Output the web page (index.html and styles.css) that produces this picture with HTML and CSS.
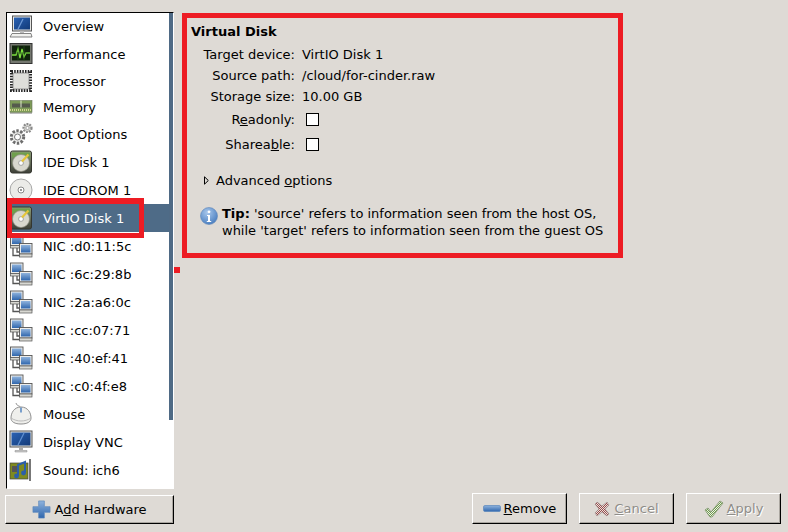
FILE: index.html
```html
<!DOCTYPE html>
<html lang="en">
<head>
<meta charset="utf-8">
<title>Virtual Disk</title>
<link rel="stylesheet" href="styles.css">
</head>
<body>
<svg class="defs" width="0" height="0" aria-hidden="true">
  <defs>
    <linearGradient id="blue" x1="0" y1="0" x2="0" y2="1"><stop offset="0" stop-color="#8fb3dd"/><stop offset="1" stop-color="#2f66ad"/></linearGradient>
    <linearGradient id="screen" x1="0" y1="0" x2="1" y2="1"><stop offset="0" stop-color="#2a62b4"/><stop offset="1" stop-color="#123a78"/></linearGradient>
    <linearGradient id="steel" x1="0" y1="0" x2="0" y2="1"><stop offset="0" stop-color="#8fa07a"/><stop offset="1" stop-color="#3d3f38"/></linearGradient>
    <radialGradient id="info" cx="0.4" cy="0.3" r="0.8"><stop offset="0" stop-color="#a9c8ec"/><stop offset="1" stop-color="#3f76bb"/></radialGradient>
    <pattern id="stipple-red" width="2" height="2" patternUnits="userSpaceOnUse"><rect width="2" height="2" fill="#e8e2de"/><rect width="1" height="1" fill="#9a4a4a"/><rect x="1" y="1" width="1" height="1" fill="#9a4a4a"/></pattern>
    <pattern id="stipple-green" width="2" height="2" patternUnits="userSpaceOnUse"><rect width="2" height="2" fill="#eef2e6"/><rect width="1" height="1" fill="#6f9a4f"/><rect x="1" y="1" width="1" height="1" fill="#6f9a4f"/></pattern>
    <symbol id="disk" viewBox="0 0 24 24">
      <rect x="1.500" y="1" width="21" height="22" rx="2" fill="url(#steel)" stroke="#34362f"/>
      <path d="M3 2.500h18v5H3z" fill="#6f9f4c"/>
      <circle cx="12" cy="13" r="8.500" fill="#d8d7ce" stroke="#8b8b80" stroke-width=".7"/>
      <circle cx="12" cy="13" r="2.400" fill="#fff" stroke="#888" stroke-width=".7"/>
      <path d="M13 11.500 19.500 4.500" stroke="#e6c53a" stroke-width="2.200"/>
    </symbol>
    <symbol id="nic" viewBox="0 0 24 24">
      <path d="M4 14v7.500h7M8 14v4h3" fill="none" stroke="#555" stroke-width="1.300"/>
      <rect x="1.500" y="1" width="12.500" height="10.500" fill="#ececea" stroke="#555" stroke-width=".9"/>
      <rect x="3" y="2.500" width="9.500" height="7.500" fill="url(#blue)"/>
      <rect x="1.500" y="11.500" width="12.500" height="2.500" fill="#d8d8d2" stroke="#555" stroke-width=".7"/>
      <rect x="10.500" y="9.500" width="12.500" height="10.500" fill="#ececea" stroke="#555" stroke-width=".9"/>
      <rect x="12" y="11" width="9.500" height="7.500" fill="url(#blue)"/>
      <rect x="10.500" y="20" width="12.500" height="3" fill="#d8d8d2" stroke="#555" stroke-width=".7"/>
    </symbol>
    <symbol id="gear" viewBox="0 0 24 24">
      <circle cx="8.500" cy="15" r="6.200" fill="#ececea" stroke="#6d6d6d" stroke-width="3" stroke-dasharray="2.400 1.500"/>
      <circle cx="8.500" cy="15" r="3" fill="#fff" stroke="#777"/>
      <circle cx="18.500" cy="6" r="4" fill="#d8d8d4" stroke="#8a8a8a" stroke-width="2.200" stroke-dasharray="1.800 1.100"/>
      <circle cx="18.500" cy="6" r="1.600" fill="#fff" stroke="#888" stroke-width=".7"/>
    </symbol>
  </defs>
</svg>

<div class="top">
  <nav class="sidebar">
    <div class="scrollbar"></div>
    <ul class="list">
      <li class="row h27"><svg class="icon" viewBox="0 0 24 24"><rect x="3.500" y="1" width="19" height="15" fill="#e6e6e3" stroke="#555"/><rect x="5" y="2.500" width="16" height="12" fill="url(#screen)"/><path d="M9 14l5-10" stroke="#6f9ad6" stroke-width="1.200"/><path d="M11 16h4v2h-4z" fill="#bbb"/><path d="M3 18.500h19l1 3.500H1z" fill="#f1f1ee" stroke="#666" stroke-width=".8"/></svg><span>Overview</span></li>
      <li class="row h28"><svg class="icon" viewBox="0 0 24 24"><rect x="1" y="1.500" width="22" height="20" fill="#74776f" stroke="#333"/><rect x="3" y="3.500" width="18" height="15" fill="#10240c"/><path d="M3 13h4l2-6 2 9 2-9 2 8 2-4h4" fill="none" stroke="#7de03f" stroke-width="1.300"/><path d="M3 11h18M9 3.500v15M15 3.500v15" stroke="#2d5a22" stroke-width=".6"/></svg><span>Performance</span></li>
      <li class="row h26"><svg class="icon" viewBox="0 0 24 24"><rect x="2.500" y="2.500" width="19" height="19" fill="none" stroke="#222" stroke-width="3" stroke-dasharray="1.500 1.200"/><rect x="4" y="4" width="16" height="16" rx="1" fill="#dededa" stroke="#777" stroke-width=".7"/></svg><span>Processor</span></li>
      <li class="row h26"><svg class="icon" viewBox="0 0 24 24"><rect x="1" y="5.500" width="22" height="12" fill="#7d9a58" stroke="#69735a" stroke-width=".6"/><path d="M3 8.500h18v4H3z" fill="#555a4d"/><path d="M12 5.500v7" stroke="#e2ead0"/><path d="M1 15h22" stroke="#d0d690" stroke-width="2" stroke-dasharray="1 1"/><path d="M1 18.500h22" stroke="#bbb"/></svg><span>Memory</span></li>
      <li class="row h28"><svg class="icon" viewBox="0 0 24 24"><use href="#gear"/></svg><span>Boot Options</span></li>
      <li class="row h28"><svg class="icon" viewBox="0 0 24 24"><use href="#disk"/></svg><span>IDE Disk 1</span></li>
      <li class="row h28"><svg class="icon" viewBox="0 0 24 24"><circle cx="12" cy="12" r="11" fill="#ebebe8" stroke="#a8a8a8"/><circle cx="12" cy="12" r="3" fill="#fff" stroke="#888"/><circle cx="12" cy="12" r="1" fill="#777"/></svg><span>IDE CDROM 1</span></li>
      <li class="row h28 selected"><svg class="icon" viewBox="0 0 24 24"><use href="#disk"/></svg><span>VirtIO Disk 1</span></li>
      <li class="row h28"><svg class="icon" viewBox="0 0 24 24"><use href="#nic"/></svg><span>NIC :d0:11:5c</span></li>
      <li class="row h28"><svg class="icon" viewBox="0 0 24 24"><use href="#nic"/></svg><span>NIC :6c:29:8b</span></li>
      <li class="row h28"><svg class="icon" viewBox="0 0 24 24"><use href="#nic"/></svg><span>NIC :2a:a6:0c</span></li>
      <li class="row h28"><svg class="icon" viewBox="0 0 24 24"><use href="#nic"/></svg><span>NIC :cc:07:71</span></li>
      <li class="row h28"><svg class="icon" viewBox="0 0 24 24"><use href="#nic"/></svg><span>NIC :40:ef:41</span></li>
      <li class="row h28"><svg class="icon" viewBox="0 0 24 24"><use href="#nic"/></svg><span>NIC :c0:4f:e8</span></li>
      <li class="row h28"><svg class="icon" viewBox="0 0 24 24"><path d="M12 7C12 3 8 5 7 1" fill="none" stroke="#888" stroke-width=".9"/><path d="M12 5c7 0 10 6 10 11 0 4-4 6-10 6S2 20 2 16C2 11 5 5 12 5z" fill="#efefec" stroke="#8f8f8f"/><path d="M2 16c6 4 14 4 20 0" fill="none" stroke="#bbb"/><path d="M12 5.500v5" stroke="#5b8bc4" stroke-width="1.600"/></svg><span>Mouse</span></li>
      <li class="row h28"><svg class="icon" viewBox="0 0 24 24"><rect x="1" y="1" width="22" height="16" fill="#e2e3e0" stroke="#555"/><rect x="2.500" y="2.500" width="19" height="13" fill="url(#screen)"/><path d="M9 15l6-12" stroke="#5f8fd0" stroke-width="1.200"/><path d="M10 17h4v3h-4z" fill="#aaa"/><path d="M6 20.500h12V22H6z" fill="#ccc" stroke="#888" stroke-width=".5"/></svg><span>Display VNC</span></li>
      <li class="row h28"><svg class="icon" viewBox="0 0 24 24"><rect x="1" y="5" width="18" height="16" fill="#7f8a1f" stroke="#444" stroke-width=".7"/><rect x="3" y="8" width="5" height="6" fill="#555"/><path d="M9 18V7l7-3v11" fill="none" stroke="#2c5fa8" stroke-width="2"/><circle cx="7.500" cy="18" r="2.400" fill="#2c5fa8"/><circle cx="14.500" cy="15" r="2.400" fill="#2c5fa8"/><path d="M21 1v22" stroke="#777" stroke-width="2"/></svg><span>Sound: ich6</span></li>
    </ul>
  </nav>

  <main class="panel">
    <h1 class="title">Virtual Disk</h1>
    <div class="info">
      <div class="label">Target device:</div><div class="value">VirtIO Disk 1</div>
      <div class="label">Source path:</div><div class="value">/cloud/for-cinder.raw</div>
      <div class="label l-c">Storage size:</div><div class="value">10.00 GB</div>
      <div class="label l-d">R<u>e</u>adonly:</div><div class="value"><span class="check"></span></div>
      <div class="label">Sharea<u>b</u>le:</div><div class="value"><span class="check"></span></div>
    </div>
    <div class="expander"><svg class="arrow" viewBox="0 0 5 9"><path d="M.5.800 4.300 4.500.5 8.200z" fill="#dedad5" stroke="#000"/></svg><span>Advanced <u>o</u>ptions</span></div>
    <div class="tip">
      <svg class="tip-icon" viewBox="0 0 18 18"><circle cx="9" cy="9" r="8.500" fill="url(#info)" stroke="#5f86b8" stroke-width=".6"/><circle cx="9" cy="4.800" r="1.400" fill="#fff"/><path d="M7 8h3v6h1.200v1H6.800v-1H8V9H7z" fill="#fff"/></svg>
      <p class="tip-text"><b>Tip:</b> 'source' refers to information seen from the host OS,<br>while 'target' refers to information seen from the guest OS</p>
    </div>
  </main>
</div>

<footer class="bottom">
  <button class="btn btn-add"><svg class="btn-icon plus" viewBox="0 0 20 20"><path d="M7 1h6v6h6v6h-6v6H7v-6H1V7h6z" fill="url(#blue)" stroke="#5a86bb" stroke-width=".7"/></svg><span>A<u>d</u>d Hardware</span></button>
  <div class="spacer"></div>
  <button class="btn btn-act"><svg class="btn-icon minus" viewBox="0 0 18 7"><rect x=".5" y=".5" width="17" height="6" rx="1.500" fill="url(#blue)" stroke="#5a86bb" stroke-width=".7"/></svg><span><u>R</u>emove</span></button>
  <button class="btn btn-act off"><svg class="btn-icon x" viewBox="0 0 16 16"><path d="M1 3l2-2 5 4 5-4 2 3-4 4 4 5-2 2-5-4-5 4-2-3 4-4z" fill="url(#stipple-red)" stroke="#8a7a7a" stroke-width=".5"/></svg><span><u>C</u>ancel</span></button>
  <button class="btn btn-act off"><svg class="btn-icon v" viewBox="0 0 20 18"><path d="M1 10l3-2 3 4 9-11 3 2L8 17H6z" fill="url(#stipple-green)" stroke="#6f8a5b" stroke-width=".7"/></svg><span><u>A</u>pply</span></button>
</footer>

<div class="mark-row"></div>
<div class="mark-dot"></div>
</body>
</html>
```

FILE: styles.css
```css
* { box-sizing: border-box; }
html, body { height: 100%; }
body {
  margin: 0;
  width: 788px;
  height: 532px;
  overflow: hidden;
  position: relative;
  background: #dedad5;
  color: #000;
  font-family: "DejaVu Sans", sans-serif;
  font-size: 13px;
  display: flex;
  flex-direction: column;
}
.defs { position: absolute; }
.top { display: flex; height: 493px; padding: 12px 0 0 6px; align-items: flex-start; }

.sidebar {
  width: 168px;
  height: 477px;
  background: #fff;
  border: 1px solid;
  border-color: #000 #fff #fff #000;
  position: relative;
  flex: none;
}
.scrollbar {
  position: absolute;
  top: 0;
  right: 0;
  width: 4px;
  height: 407px;
  background: #4f6a85;
}
.list { list-style: none; margin: 0; padding: 0 4px 0 0; }
.row { display: flex; align-items: center; padding-left: 2px; }
.h26 { height: 26px; }
.h27 { height: 27px; }
.h28 { height: 28px; }
.row span { margin-left: 10px; }
.icon { width: 24px; height: 24px; flex: none; margin: -2px 0; }
.selected { background: #4e6b87; color: #fff; }

.panel {
  width: 441px;
  height: 245px;
  margin: 1px 0 0 8px;
  border: 5px solid #ed1c24;
  padding: 5px 0 0 4px;
  flex: none;
}
.title { margin: 0; font-size: 13px; font-weight: bold; line-height: 18px; }
.info {
  display: grid;
  grid-template-columns: 104px auto;
  column-gap: 7px;
  justify-content: start;
  margin-top: 4px;
}
.label { text-align: right; height: 21px; line-height: 20px; }
.value { height: 21px; line-height: 20px; }
.l-c { height: 23px; }
.l-d { height: 25px; }
.check {
  display: block;
  width: 13px;
  height: 13px;
  margin: 3px 0 0 4px;
  background: #fff;
  border: 1px solid #000;
}
.expander { display: flex; align-items: center; margin: 14px 0 0 13px; height: 20px; }
.arrow { width: 5px; height: 9px; margin-right: 7px; flex: none; }
.tip { display: flex; margin: 17px 0 0 9px; }
.tip-icon { width: 18px; height: 18px; flex: none; }
.tip-text { margin: -2px 0 0 4px; line-height: 17px; }

.bottom { display: flex; align-items: flex-end; height: 39px; padding: 0 7px 8px 5px; }
.spacer { flex: 1; }
.btn {
  display: flex;
  align-items: center;
  justify-content: center;
  font: inherit;
  color: inherit;
  background: #dedad5;
  border: 1px solid;
  border-color: #fff #000 #000 #fff;
  box-shadow: inset 0 -1px 0 #aaa6a0, inset -1px 0 0 #aaa6a0;
  padding: 0;
  height: 31px;
}
.btn-add { width: 169px; height: 29px; }
.btn-act { width: 95px; margin-left: 12px; }
.off { color: #8f8d89; text-shadow: 1px 1px 0 #fff; }
.btn-icon { flex: none; margin-right: 3px; }
.plus { width: 19px; height: 19px; }
.minus { width: 18px; height: 7px; }
.x { width: 16px; height: 16px; margin-right: 4px; }
.v { width: 20px; height: 18px; margin-right: 3px; }

.mark-row {
  position: absolute;
  left: 7px;
  top: 198px;
  width: 137px;
  height: 40px;
  border: 5px solid #ed1c24;
  border-top-width: 6px;
}
.mark-dot {
  position: absolute;
  left: 174px;
  top: 267px;
  width: 6px;
  height: 6px;
  background: #ed1c24;
}
```
